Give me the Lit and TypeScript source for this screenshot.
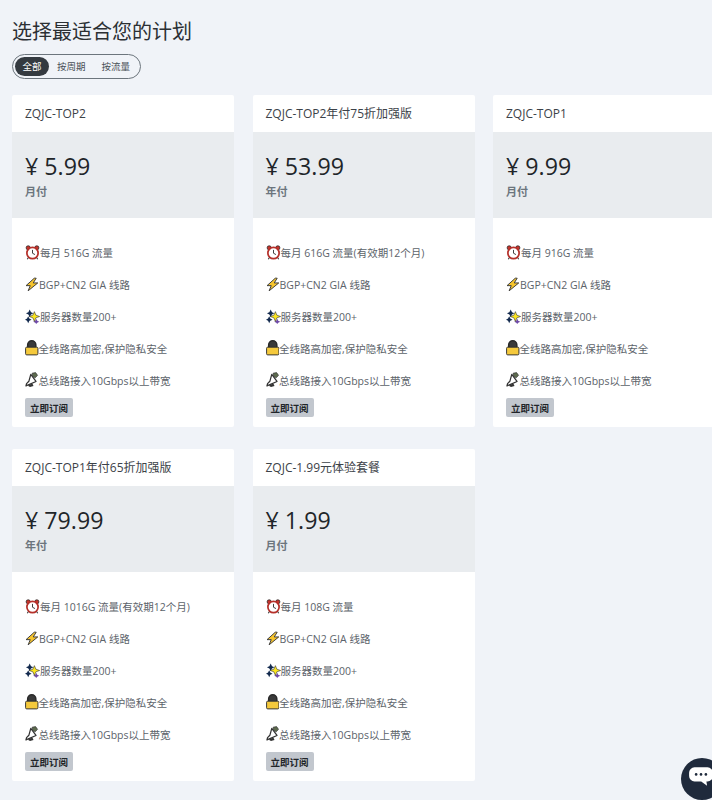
import { LitElement, html, css, svg } from 'lit';
import { customElement } from 'lit/decorators.js';

const icons = {
  clock: svg`<svg viewBox="0 0 16 16" width="15" height="15">
    <circle cx="3.4" cy="3" r="2.2" fill="#c8352c" stroke="#222" stroke-width=".8"/>
    <circle cx="12.6" cy="3" r="2.2" fill="#c8352c" stroke="#222" stroke-width=".8"/>
    <circle cx="8" cy="8.6" r="6" fill="#fff" stroke="#b5302a" stroke-width="1.8"/>
    <path d="M8 5.2V8.8L10.6 10.2" fill="none" stroke="#333" stroke-width="1"/>
    <path d="M3.5 13.6 2.4 15.2M12.5 13.6l1.1 1.6" stroke="#333" stroke-width="1.1"/>
  </svg>`,
  bolt: svg`<svg viewBox="0 0 16 16" width="14" height="15">
    <path d="M10.6 .8 1.2 9.3H6L3.6 15.2 14.6 6.2H9.4L12.8 .8Z" fill="#f7c52d" stroke="#3a3a3a" stroke-width="1.1" stroke-linejoin="round"/>
  </svg>`,
  star: svg`<svg viewBox="0 0 16 16" width="15" height="15">
    <path d="M5 .6 6.4 3.4 9 4.6 6.4 5.8 5 8.6 3.6 5.8 1 4.6 3.6 3.4Z" fill="#12294d"/>
    <path d="M3.4 7.6 4.6 10.2 7 11.4 4.6 12.6 3.4 15.2 2.2 12.6 0 11.4 2.2 10.2Z" fill="#12294d"/>
    <path d="M12 10.4 13 12.6 15.2 13.6 13 14.6 12 16 11 14.6 8.8 13.6 11 12.6Z" fill="#6f4aa8"/>
    <path d="M10 2.8 11.6 6.6 15.6 8 11.6 9.4 10 13.2 8.4 9.4 4.4 8 8.4 6.6Z" fill="#fbe51e" stroke="#2b2b2b" stroke-width=".6"/>
  </svg>`,
  lock: svg`<svg viewBox="0 0 14 16" width="13.5" height="15.5">
    <path d="M2.8 8V5a4.2 4.2 0 0 1 8.4 0V8Z" fill="#3a3a3a" stroke="#2a2a2a" stroke-width="1.6"/>
    <rect x=".6" y="7.4" width="12.8" height="8" rx="1.2" fill="#f5c93c" stroke="#333" stroke-width="1"/>
  </svg>`,
  bell: svg`<svg viewBox="0 0 14 16" width="13.5" height="15.5">
    <path d="M6 2.4 11.4 9.8 1 14.4 1.6 12 4 9.6Z" fill="#fff" stroke="#333" stroke-width="1.3" stroke-linejoin="round"/>
    <path d="M7.4 1.2 11 .6 13 3.4 10.6 6 8 4.4Z" fill="#5d6b4e" stroke="#333" stroke-width=".7"/>
    <path d="M3.4 14.6 5.2 15.6 8.8 14.6 7.8 12.2 3.6 13.2Z" fill="#333"/>
  </svg>`,
};

interface Plan {
  name: string;
  price: string;
  cycle: string;
  traffic: string;
}

const plans: Plan[] = [
  { name: 'ZQJC-TOP2', price: '5.99', cycle: '月付', traffic: '每月 516G 流量' },
  { name: 'ZQJC-TOP2年付75折加强版', price: '53.99', cycle: '年付', traffic: '每月 616G 流量(有效期12个月)' },
  { name: 'ZQJC-TOP1', price: '9.99', cycle: '月付', traffic: '每月 916G 流量' },
  { name: 'ZQJC-TOP1年付65折加强版', price: '79.99', cycle: '年付', traffic: '每月 1016G 流量(有效期12个月)' },
  { name: 'ZQJC-1.99元体验套餐', price: '1.99', cycle: '月付', traffic: '每月 108G 流量' },
];

@customElement('app-root')
export class AppRoot extends LitElement {
  static styles = css`
    :host {
      display: block;
      box-sizing: border-box;
      width: 712px;
      height: 800px;
      overflow: hidden;
      position: relative;
      background: #f0f3f8;
      padding: 17px 0 0 12px;
      font-family: 'Open Sans', 'Noto Sans CJK SC', sans-serif;
      color: #212529;
    }

    h1 {
      margin: 0;
      font-size: 20px;
      line-height: 30px;
      font-weight: 400;
      color: #2b2f33;
    }

    .tabs {
      display: flex;
      width: fit-content;
      align-items: center;
      margin-top: 7px;
      padding: 2px;
      height: 19px;
      border: 1px solid #6c757d;
      border-radius: 13px;
    }

    .tab {
      font-size: 9.5px;
      line-height: 19px;
      padding: 0 8px;
      color: #495057;
      border-radius: 10px;
    }

    .tab.active {
      background: #343a40;
      color: #fff;
      padding: 0 7.5px;
    }

    .grid {
      display: grid;
      grid-template-columns: repeat(3, 222px);
      column-gap: 18.5px;
      row-gap: 22px;
      margin-top: 16px;
      width: 720px;
    }

    .card {
      background: #fff;
      height: 332px;
      border-radius: 2px;
      display: flex;
      flex-direction: column;
    }

    .name {
      height: 37px;
      line-height: 37px;
      padding-left: 13px;
      font-size: 12px;
      color: #3c4248;
    }

    .band {
      height: 86px;
      box-sizing: border-box;
      background: #e9ecef;
      padding: 18px 13px 0;
    }

    .price {
      font-size: 23.2px;
      line-height: 32px;
      color: #212529;
      font-weight: 500;
    }

    .cycle {
      font-size: 11px;
      line-height: 16px;
      margin-top: 2px;
      font-weight: 600;
      color: #6c757d;
    }

    ul {
      list-style: none;
      margin: 0;
      padding: 18px 13px 0;
    }

    li {
      height: 32px;
      display: flex;
      align-items: center;
      font-size: 10.5px;
      color: #5c636a;
      white-space: nowrap;
    }

    li svg {
      flex: none;
    }

    button {
      align-self: flex-start;
      margin: 2px 0 0 13px;
      height: 19px;
      width: 48px;
      padding: 0;
      border: 0;
      border-radius: 2px;
      background: #c2c7ce;
      color: #212529;
      font: 700 9.5px 'Open Sans', 'Noto Sans CJK SC', sans-serif;
    }

    .chat {
      position: absolute;
      left: 681px;
      top: 758px;
      width: 42px;
      height: 42px;
      border-radius: 50%;
      background: #1f2a3c;
      display: flex;
      align-items: center;
      justify-content: center;
    }

    .chat svg {
      margin: -6px 0 0 -2px;
    }
  `;

  render() {
    return html`
      <h1>选择最适合您的计划</h1>
      <div class="tabs">
        <span class="tab active">全部</span>
        <span class="tab">按周期</span>
        <span class="tab">按流量</span>
      </div>
      <div class="grid">
        ${plans.map(
          (p) => html`
            <div class="card">
              <div class="name">${p.name}</div>
              <div class="band">
                <div class="price">¥ ${p.price}</div>
                <div class="cycle">${p.cycle}</div>
              </div>
              <ul>
                <li>${icons.clock}${p.traffic}</li>
                <li>${icons.bolt}BGP+CN2 GIA 线路</li>
                <li>${icons.star}服务器数量200+</li>
                <li>${icons.lock}全线路高加密,保护隐私安全</li>
                <li>${icons.bell}总线路接入10Gbps以上带宽</li>
              </ul>
              <button>立即订阅</button>
            </div>
          `
        )}
      </div>
      <div class="chat">
        <svg viewBox="0 0 24 24" width="26" height="26">
          <path d="M6 4h12a5 5 0 0 1 5 5v3a5 5 0 0 1-5 5h-1l.6 4-5.4-4H6a5 5 0 0 1-5-5V9a5 5 0 0 1 5-5Z" fill="#fff"/>
          <circle cx="7.5" cy="10.5" r="1.2" fill="#1f2a3c"/>
          <circle cx="12" cy="10.5" r="1.2" fill="#1f2a3c"/>
          <circle cx="16.5" cy="10.5" r="1.2" fill="#1f2a3c"/>
        </svg>
      </div>
    `;
  }
}
